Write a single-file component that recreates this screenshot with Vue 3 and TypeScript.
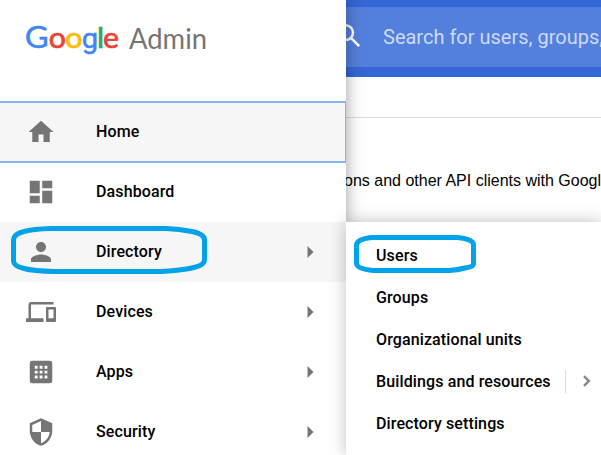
<script setup lang="ts">
interface NavItem {
  label: string
  icon: string
  expandable?: boolean
  state?: 'focused' | 'open'
}

interface SubItem {
  label: string
  expandable?: boolean
}

const logo = [
  { char: 'G', tone: 'blue wide', x: 24.8, width: 24 },
  { char: 'o', tone: 'red', x: 48.8, width: 17.2 },
  { char: 'o', tone: 'yellow', x: 65.3, width: 17.2 },
  { char: 'g', tone: 'blue round', x: 81.8, width: 16.4 },
  { char: 'l', tone: 'green', x: 97, width: 7.1 },
  { char: 'e', tone: 'red', x: 103, width: 16 },
]

const navItems: NavItem[] = [
  { label: 'Home', state: 'focused', icon: 'M10 20v-6h4v6h5v-8h3L12 3 2 12h3v8z' },
  { label: 'Dashboard', icon: 'M3 13h8V3H3v10zm0 8h8v-6H3v6zm10 0h8V11h-8v10zm0-18v6h8V3h-8z' },
  {
    label: 'Directory',
    state: 'open',
    expandable: true,
    icon: 'M12 12c2.21 0 4-1.79 4-4s-1.79-4-4-4-4 1.79-4 4 1.79 4 4 4zm0 2c-2.67 0-8 1.34-8 4v2h16v-2c0-2.66-5.33-4-8-4z',
  },
  {
    label: 'Devices',
    expandable: true,
    icon: 'M4 6h18V4H4c-1.1 0-2 .9-2 2v11H0v3h14v-3H4V6zm19 2h-6c-.55 0-1 .45-1 1v10c0 .55.45 1 1 1h6c.55 0 1-.45 1-1V9c0-.55-.45-1-1-1zm-1 9h-4v-7h4v7z',
  },
  {
    label: 'Apps',
    expandable: true,
    icon: 'M5 3h14a2 2 0 0 1 2 2v14a2 2 0 0 1-2 2H5a2 2 0 0 1-2-2V5a2 2 0 0 1 2-2zM7 7v2.3h2.3V7zm3.9 0v2.3h2.3V7zm3.9 0v2.3h2.3V7zM7 10.9v2.3h2.3v-2.3zm3.9 0v2.3h2.3v-2.3zm3.9 0v2.3h2.3v-2.3zM7 14.8v2.3h2.3v-2.3zm3.9 0v2.3h2.3v-2.3zm3.9 0v2.3h2.3v-2.3z',
  },
  {
    label: 'Security',
    expandable: true,
    icon: 'M12 1L3 5v6c0 5.55 3.84 10.74 9 12 5.16-1.26 9-6.45 9-12V5l-9-4zm0 10.99h7c-.53 4.12-3.28 7.79-7 8.94V12H5V6.3l7-3.11v8.8z',
  },
]

const subItems: SubItem[] = [
  { label: 'Users' },
  { label: 'Groups' },
  { label: 'Organizational units' },
  { label: 'Buildings and resources', expandable: true },
  { label: 'Directory settings' },
]
</script>

<template>
  <div class="screen">
    <nav class="sidebar">
      <div class="brand">
        <svg class="brand-logo" viewBox="0 0 346 101" role="img" aria-label="Google Admin">
          <text
            v-for="(l, i) in logo"
            :key="i"
            :x="l.x"
            y="48"
            :textLength="l.width"
            lengthAdjust="spacingAndGlyphs"
            :class="['letter', l.tone]"
          >{{ l.char }}</text>
          <text x="129" y="49" class="product" textLength="78" lengthAdjust="spacingAndGlyphs">Admin</text>
        </svg>
      </div>
      <div v-for="item in navItems" :key="item.label" :class="['nav-row', item.state]">
        <svg class="nav-icon" viewBox="0 0 24 24"><path :d="item.icon" fill-rule="evenodd" /></svg>
        <span class="nav-label">{{ item.label }}</span>
        <svg v-if="item.expandable" class="nav-arrow" viewBox="0 0 7 12"><path d="M0.500 0l6 6-6 6z" /></svg>
        <svg v-if="item.state === 'open'" class="nav-mark" viewBox="0 0 198 50">
          <path d="M40 3.500H155C166 4 173 5 181 6.500Q193.500 9 193.500 15V35Q193.500 40 183 42.500Q173 45 151 46.500H44Q22 46 13 43.500Q2.500 41 2.500 36V15Q2.500 9 13 6.500Q22 4 40 3.500Z" />
        </svg>
      </div>
    </nav>

    <main class="page">
      <header class="topbar">
        <div class="search">
          <svg class="search-icon" viewBox="0 0 28 28"><circle cx="9.600" cy="9.600" r="7.400" /><path d="M15 15l8.200 8.200" /></svg>
          <span>Search for users, groups,</span>
        </div>
      </header>
      <div class="toolbar"></div>
      <p class="description">ons and other API clients with Googl</p>
      <section class="submenu">
        <div v-for="sub in subItems" :key="sub.label" class="sub-row">
          <span>{{ sub.label }}</span>
          <span v-if="sub.expandable" class="sub-more">
            <svg viewBox="0 0 8 12"><path d="M1 1.200L5.800 6 1 10.800" /></svg>
          </span>
          <svg v-if="sub.label === 'Users'" class="sub-mark" viewBox="0 0 122 38">
            <path d="M18 2.500H103Q119.500 4 119.500 10V29Q119.500 32 111 33Q104 35 95 35.500H20Q2.500 34 2.500 28V10Q3 4 18 2.500Z" />
          </svg>
        </div>
      </section>
    </main>
  </div>
</template>

<style>
body {
  overflow: hidden;
}
</style>

<style scoped>
.screen {
  display: flex;
  width: 601px;
  height: 455px;
  overflow: hidden;
  background: #fff;
  color: #000;
  font-family: Roboto, 'Liberation Sans', sans-serif;
}

.sidebar {
  position: relative;
  z-index: 1;
  flex: 0 0 346px;
  background: #fff;
  box-shadow: 0 0 16px rgba(0, 0, 0, 0.38);
}

.brand {
  height: 102px;
}

.brand-logo {
  display: block;
  width: 346px;
  height: 101px;
}

.letter {
  font: 400 29px Lato, sans-serif;
  stroke-width: 0.7px;
}

.letter.wide {
  font-size: 30px;
  stroke-width: 0.4px;
}

.letter.round {
  font: 400 28px Roboto, sans-serif;
  stroke-width: 0.5px;
}

.blue { fill: #4285f4; stroke: #4285f4; }
.red { fill: #ea4335; stroke: #ea4335; }
.yellow { fill: #fbbc05; stroke: #fbbc05; }
.green { fill: #34a853; stroke: #34a853; }

.product {
  fill: #757575;
  font: 400 28px Lato, sans-serif;
}

.nav-row {
  position: relative;
  display: flex;
  align-items: center;
  box-sizing: border-box;
  height: 60px;
  padding: 0 32px 0 26px;
}

.nav-row.focused {
  z-index: 1;
  background: #f6f6f6;
  box-shadow: inset -1px 0 #8ab4f8, inset 0 1px #8ab4f8, inset 0 -1px #8ab4f8, 0 -1px #8ab4f8, 0 1px #8ab4f8;
}

.nav-row.open {
  background: #f6f6f6;
}

.nav-icon {
  width: 30px;
  height: 30px;
  fill: #757575;
}

.nav-label {
  flex: 1;
  margin-left: 40px;
  font-size: 16px;
  font-weight: 500;
  letter-spacing: 0.12px;
  line-height: 20px;
}

.nav-arrow {
  width: 7px;
  height: 12px;
  fill: #757575;
}

.nav-mark {
  position: absolute;
  top: 3px;
  left: 11px;
  width: 198px;
  height: 50px;
}

.nav-mark path,
.sub-mark path {
  fill: none;
  stroke: #00a2e8;
  stroke-width: 5px;
}

.page {
  display: flex;
  flex: 1;
  flex-direction: column;
  min-width: 0;
}

.topbar {
  height: 77px;
  box-sizing: border-box;
  padding: 7px 0 10px;
  background: #3367d6;
}

.search {
  display: flex;
  align-items: center;
  height: 60px;
  background: #5480dd;
  color: #ccd9f5;
  font-size: 20px;
  white-space: nowrap;
}

.search-icon {
  flex: none;
  width: 28px;
  height: 28px;
  margin: 0 19px 0 -10px;
  fill: none;
  stroke: #fff;
  stroke-width: 2.500px;
}

.toolbar {
  height: 40px;
  border-bottom: 1px solid #dcdcdc;
}

.description {
  height: 104px;
  box-sizing: border-box;
  margin: 0 0 0 -2px;
  padding-top: 53px;
  font: 16px/20px 'Liberation Sans', sans-serif;
  white-space: nowrap;
}

.submenu {
  position: relative;
  z-index: 2;
  flex: 1;
  padding-top: 12px;
  background: #fff;
  box-shadow: 0 0 16px rgba(0, 0, 0, 0.26);
}

.sub-row {
  position: relative;
  display: flex;
  align-items: center;
  height: 42px;
  padding-left: 30px;
  font-size: 16px;
  font-weight: 500;
  letter-spacing: 0.12px;
  white-space: nowrap;
}

.sub-more {
  display: flex;
  align-items: center;
  height: 23px;
  margin-left: 14px;
  padding-left: 17px;
  border-left: 1px solid #dadada;
}

.sub-more svg {
  width: 8px;
  height: 12px;
  margin-bottom: 1px;
  fill: none;
  stroke: #868686;
  stroke-width: 2.400px;
}

.sub-mark {
  position: absolute;
  top: 1px;
  left: 8px;
  width: 122px;
  height: 38px;
}
</style>
